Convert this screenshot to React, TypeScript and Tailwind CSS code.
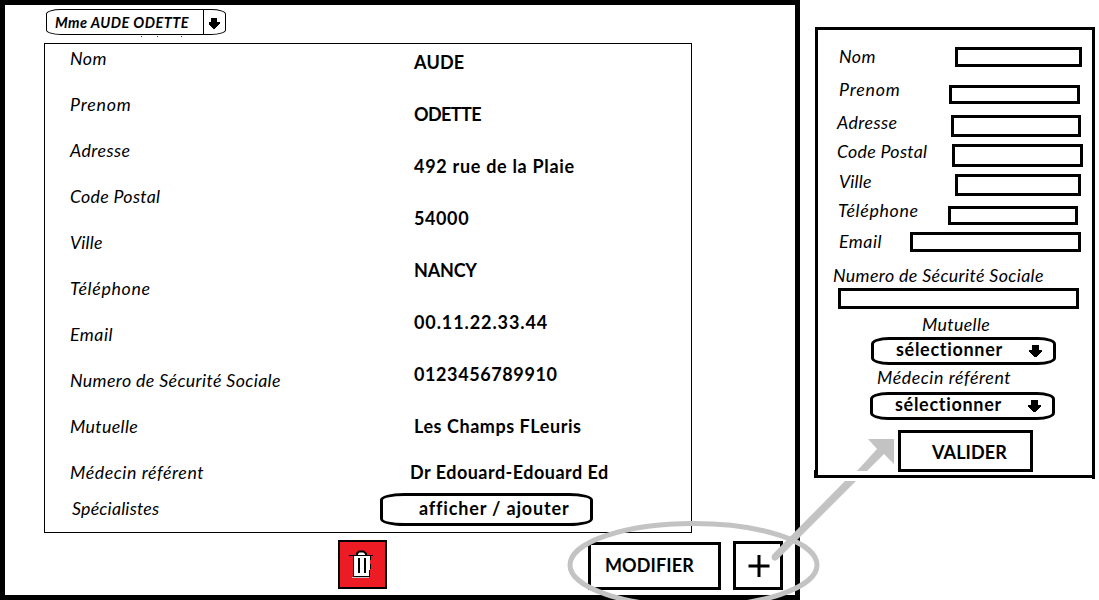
import React from "react";

const label = "block whitespace-nowrap pb-[2px] text-[17.8px] leading-[22px] italic";
const strong = "block whitespace-nowrap text-[18px] leading-[24px] font-bold";

const details: [string, string][] = [
  ["Nom", "tracking-[0.5px]"],
  ["Prenom", "tracking-[0.8px]"],
  ["Adresse", "tracking-[0.45px]"],
  ["Code Postal", "tracking-[0.28px]"],
  ["Ville", "tracking-[0.15px]"],
  ["Téléphone", "tracking-[0.65px]"],
  ["Email", "tracking-[0.5px]"],
  ["Numero de Sécurité Sociale", "tracking-[0.36px]"],
  ["Mutuelle", "tracking-[0.35px]"],
  ["Médecin référent", "tracking-[0.56px]"],
];

const values: [string, string][] = [
  ["AUDE", "tracking-[0.2px]"],
  ["ODETTE", "tracking-[-0.6px]"],
  ["492 rue de la Plaie", "tracking-[0.7px]"],
  ["54000", "tracking-[0.6px]"],
  ["NANCY", "tracking-[-0.2px]"],
  ["00.11.22.33.44", "tracking-[0.9px]"],
  ["0123456789910", "tracking-[0.6px]"],
  ["Les Champs FLeuris", "tracking-[0.55px]"],
];

const fields = [
  { name: "Nom", text: "tracking-[0.5px]", row: "h-[33px] pl-[21px] pr-[10px]", box: "mt-[2px] h-[20px] w-[127px]" },
  { name: "Prenom", text: "tracking-[0.8px]", row: "h-[33px] pl-[21px] pr-[12px]", box: "mt-[7px] h-[19px] w-[131px]" },
  { name: "Adresse", text: "tracking-[0.45px]", row: "h-[29px] pl-[19px] pr-[11px]", box: "mt-[4px] h-[22px] w-[130px]" },
  { name: "Code Postal", text: "tracking-[0.28px]", row: "h-[30px] pl-[19px] pr-[9px]", box: "mt-[4px] h-[23px] w-[131px]" },
  { name: "Ville", text: "tracking-[0.15px]", row: "h-[29px] pl-[21px] pr-[11px]", box: "mt-[4px] h-[22px] w-[126px]" },
  { name: "Téléphone", text: "tracking-[0.65px]", row: "h-[31px] pl-[20px] pr-[14px]", box: "mt-[7px] h-[19px] w-[130px]" },
  { name: "Email", text: "tracking-[0.5px]", row: "h-[34px] pl-[21px] pr-[11px]", box: "mt-[2px] h-[20px] w-[171px]" },
];

function DownArrow({ className }: { className: string }) {
  return (
    <svg viewBox="0 0 13 13" className={className} shapeRendering="crispEdges">
      <path d="M3 0H10V5H13V7L8 12.5H6L0 7V5H3Z" fill="#000" />
    </svg>
  );
}

function Select({ className }: { className: string }) {
  return (
    <button
      className={`flex h-[28px] w-[185px] items-start rounded-[18px/7px] border-[3px] border-black pl-[22px] ${className}`}
    >
      <span className={`${strong} -mt-[3px] w-[133px] text-left tracking-[0.7px]`}>sélectionner</span>
      <DownArrow className="mt-[4px] h-[14px] w-[13px]" />
    </button>
  );
}

function Trash() {
  return (
    <svg viewBox="0 0 25 29" className="h-[29px] w-[25px]">
      <path d="M4 6H21V27H4Z" fill="#fff" />
      <path d="M3 27.5H20" stroke="#c3c3c3" />
      <path d="M8 5L10 2H15L17 5Z" fill="#fff" />
      <g fill="none" stroke="#000" shapeRendering="crispEdges">
        <path d="M0 5.5H24" strokeWidth="1" />
        <path d="M4.500 6V26.500H20.500" />
        <path d="M20.500 26V20M21.500 19V14M21.500 6V10" />
        <path d="M10 8V23M16 8V23" strokeWidth="2" />
      </g>
      <path d="M8 5V3.500L10 1.500H14.500L17 3.500V5" fill="none" stroke="#000" strokeWidth="2" />
    </svg>
  );
}

export default function App() {
  return (
    <div className="relative flex h-[600px] w-[1099px] items-start overflow-hidden bg-white font-['Lato',sans-serif] text-black [font-variant-ligatures:none]">
      <main className="flex h-[600px] w-[800px] shrink-0 flex-col border-[5px] border-black">
        <button className="mt-[4px] ml-[41px] flex h-[26px] w-[180px] shrink-0 rounded-[15px/5px] border border-black">
          <span className="flex h-[25px] w-[157px] shrink-0 items-center border-r border-black pl-[8px] text-[14.5px] font-bold tracking-[0.45px] whitespace-nowrap italic">
            Mme AUDE ODETTE
          </span>
          <DownArrow className="mt-[8px] ml-[4px] h-[11px] w-[12px]" />
        </button>

        <section className="mt-[8px] ml-[39px] h-[490px] w-[648px] shrink-0 border border-black">
          <div className="flex h-[446px]">
            <div className="flex w-[340px] shrink-0 flex-col gap-[22px] pt-[3px] pl-[25px]">
              {details.map(([text, spacing]) => (
                <span key={text} className={`${label} ${spacing}`}>{text}</span>
              ))}
            </div>
            <div className="flex flex-col gap-[28px] pt-[6px] pl-[29px]">
              {values.map(([text, spacing]) => (
                <span key={text} className={`${strong} ${spacing}`}>{text}</span>
              ))}
              <span className={`${strong} -mt-[6px] -ml-[4px] tracking-[0.48px]`}>Dr Edouard-Edouard Ed</span>
            </div>
          </div>
          <div className="flex items-start pt-[3px] pl-[27px]">
            <span className={`${label} mt-[4px] w-[308px] tracking-[0.2px]`}>Spécialistes</span>
            <button className="flex h-[33px] w-[213px] items-start rounded-[24px/7px] border-[3px] border-black pl-[36px]">
              <span className={`${strong} tracking-[0.83px]`}>afficher / ajouter</span>
            </button>
          </div>
        </section>

        <div className="flex shrink-0 items-start pt-[7px] pl-[333px]">
          <button className="flex h-[49px] w-[49px] items-start border-2 border-black bg-[#ed1c24] pt-[8px] pl-[9px]">
            <Trash />
          </button>
          <button className="mt-[2px] ml-[201px] flex h-[48px] w-[133px] items-center border-[3px] border-black pb-[2px] pl-[14px]">
            <span className={`${strong} tracking-[0.1px]`}>MODIFIER</span>
          </button>
          <button aria-label="Ajouter" className="mt-[1px] ml-[12px] flex h-[49px] w-[50px] items-center justify-center border-[3px] border-black pl-px">
            <svg viewBox="0 0 22 22" className="h-[22px] w-[22px]">
              <path d="M11 0V22M0.500 11H21.500" stroke="#000" strokeWidth="3" />
            </svg>
          </button>
        </div>
      </main>

      <aside className="mt-[27px] ml-[15px] flex h-[451px] w-[280px] shrink-0 flex-col border-[3px] border-black pt-[15px]">
        {fields.map((f) => (
          <div key={f.name} className={`flex shrink-0 items-start justify-between ${f.row}`}>
            <label className={`${label} ${f.text}`}>{f.name}</label>
            <div className={`border-[3px] border-black ${f.box}`} />
          </div>
        ))}
        <label className={`${label} ml-[15px] tracking-[0.36px]`}>Numero de Sécurité Sociale</label>
        <div className="ml-[20px] h-[21px] w-[241px] shrink-0 border-[3px] border-black" />
        <label className={`${label} mt-[4px] ml-[104px] tracking-[0.35px]`}>Mutuelle</label>
        <Select className="ml-[53px] shrink-0" />
        <label className={`${label} mt-[1px] ml-[59px] tracking-[0.56px]`}>Médecin référent</label>
        <Select className="mt-[2px] ml-[52px] shrink-0" />
        <button className="mt-[10px] ml-[80px] flex h-[42px] w-[135px] shrink-0 items-center border-[3px] border-black pt-[2px] pl-[31px]">
          <span className={`${strong} tracking-[0.1px]`}>VALIDER</span>
        </button>
      </aside>

      <svg viewBox="0 0 1099 600" className="pointer-events-none absolute inset-0 h-[600px] w-[1099px]">
        <ellipse cx="693.500" cy="565" rx="123.500" ry="41.500" fill="none" stroke="#c3c3c3" strokeWidth="5" />
        <path d="M772 555L845 481H856L777 560Q773 562 771.500 558Z" fill="#c3c3c3" />
        <path d="M857 471L877 449L868 439H894V464L884 454L867 471Z" fill="#c3c3c3" />
        <path d="M141 36.500H142M157 36.500H158M181 36.500H182" stroke="#333" />
        <path d="M814 470H815V478H814ZM1092 470H1095V479H1092Z" fill="#000" />
      </svg>
    </div>
  );
}
